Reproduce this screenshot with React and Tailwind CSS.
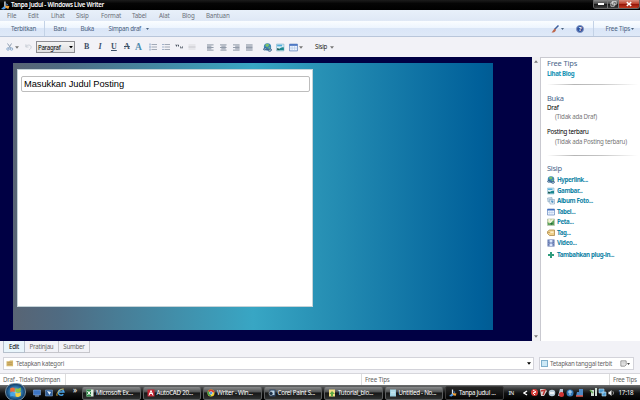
import React, { useState } from 'react';
import clsx from 'clsx';

const menus = [
  { label: 'File', w: 'w-[21px]' },
  { label: 'Edit', w: 'w-[23px]' },
  { label: 'Lihat', w: 'w-[25px]' },
  { label: 'Sisip', w: 'w-[25px]' },
  { label: 'Format', w: 'w-[31px]' },
  { label: 'Tabel', w: 'w-[27px]' },
  { label: 'Alat', w: 'w-[23px]' },
  { label: 'Blog', w: 'w-[24px]' },
  { label: 'Bantuan', w: 'w-[30px]' },
];

const Arrow = ({ className }) => (
  <svg viewBox="0 0 6 4" className={clsx('shrink-0', className)}>
    <path d="M0 0h6L3 4z" fill="currentColor" />
  </svg>
);

const Icon = ({ className, children }) => (
  <svg viewBox="0 0 16 16" className={clsx('shrink-0', className || 'w-[8px] h-[8px]')} fill="none">
    {children}
  </svg>
);

const LinkIcon = ({ className }) => (
  <Icon className={className}>
    <circle cx="8" cy="7" r="6.5" fill="#3c88b8" />
    <path d="M4 3c3-3 7-1 7 1L8 7 5 6zM9 8l4-1-1 4z" fill="#7fc268" />
    <path d="M1 11c0-3 6-3 7 0s7-3 7 1-6 3-7 0-7 3-7-1z" stroke="#31567e" strokeWidth="1.6" fill="#b5cfe2" />
  </Icon>
);

const ImageIcon = ({ className }) => (
  <Icon className={className}>
    <path d="M1 2h13v12H1z" fill="#dff1f8" stroke="#71a9c4" />
    <path d="M2 3h9v3H2z" fill="#52aedc" />
    <path d="M5 13c1-5 6-6 9-5v5z" fill="#1b8790" />
    <path d="M2 9l4 1v3H2z" fill="#1e5d55" />
  </Icon>
);

const TableIcon = ({ className }) => (
  <Icon className={className}>
    <path d="M1 2h14v12H1z" fill="#eef5ff" stroke="#6b8cc2" strokeWidth="1.5" />
    <path d="M1 2h14v3H1z" fill="#426fc0" />
    <path d="M5.5 5v9M10 5v9M1 9h14" stroke="#a9c1e2" />
  </Icon>
);

const AlbumIcon = () => (
  <Icon>
    <path d="M1 2l9-1 1 8-9 1z" fill="#c8dceb" stroke="#7a9bb5" />
    <path d="M5 5h10v9H6z" fill="#eef5fa" stroke="#6f8fae" />
    <path d="M7 7h6v4l-3 1z" fill="#5797c4" />
  </Icon>
);

const MapIcon = () => (
  <Icon>
    <path d="M1 2h14v13H1z" fill="#dfe7b8" stroke="#89a08a" />
    <path d="M1 8l5 3 8-7v10H2z" fill="#5da35c" />
    <path d="M4 2l3 7 4-6" stroke="#f7f8ee" strokeWidth="2" />
    <path d="M6 10l3 4 3-4z" fill="#286b3e" />
  </Icon>
);

const TagIcon = () => (
  <Icon>
    <path d="M5 2h10v11H5L1 9V5z" fill="#efd08b" stroke="#a98342" strokeWidth="1.5" />
    <path d="M7 5h6v3H7z" fill="#fbeecb" />
    <circle cx="4" cy="7" r="1" fill="#84602b" />
  </Icon>
);

const VideoIcon = () => (
  <Icon>
    <path d="M1 1h14v14H1z" fill="#5b70aa" />
    <path d="M5 2h6v5H5zM5 9h6v5H5z" fill="#dbe6fb" />
    <path d="M3 1v14M13 1v14" stroke="#a8b6dd" strokeDasharray="2 1.5" />
  </Icon>
);

const PlusIcon = () => (
  <Icon>
    <path d="M8 2v12M2 8h12" stroke="#2f9c7c" strokeWidth="4" />
  </Icon>
);

// small blue and orange "pen" mark of the application
const WriterIcon = ({ className }) => (
  <Icon className={className}>
    <path d="M7 1v10" stroke="#d9e4ef" strokeWidth="2.5" />
    <path d="M0 14l6-5 4 3-5 3z" fill="#4f9be8" />
    <path d="M7 8l8 1-2 5-5-2z" fill="#f1a23a" />
    <path d="M9 4l4 2-3 3z" fill="#4577b8" />
  </Icon>
);

const links = [
  { label: 'Hyperlink...', icon: <LinkIcon /> },
  { label: 'Gambar...', icon: <ImageIcon /> },
  { label: 'Album Foto...', icon: <AlbumIcon /> },
  { label: 'Tabel...', icon: <TableIcon /> },
  { label: 'Peta...', icon: <MapIcon /> },
  { label: 'Tag...', icon: <TagIcon /> },
  { label: 'Video...', icon: <VideoIcon /> },
];

const TitleBar = () => (
  <div className="h-[10px] shrink-0 flex items-start bg-[linear-gradient(#1c1c1c,#050505_35%,#000)] text-white">
    <WriterIcon className="w-[9px] h-[9px] ml-px mt-px" />
    <span className="ml-px font-semibold text-[6.2px] leading-[10px] tracking-[-0.28px]">Tanpa Judul - Windows Live Writer</span>
    <div className="ml-auto w-[47px] h-[9px] flex rounded-b-[3px] overflow-hidden border border-t-0 border-[#666]">
      <div className="w-[14px] flex items-center justify-center bg-[linear-gradient(#8a8a8a,#4a4a4a_45%,#161616_50%,#3b3b3b)] border-r border-[#777]">
        <div className="w-[6px] h-[2px] bg-white" />
      </div>
      <div className="w-[11px] flex items-center justify-center bg-[linear-gradient(#8a8a8a,#4a4a4a_45%,#161616_50%,#3b3b3b)] border-r border-[#777]">
        <Icon className="w-[7px] h-[6px]">
          <path d="M5 1h10v9H5zM1 5h9v9H1z" stroke="#eee" strokeWidth="2" />
        </Icon>
      </div>
      <div className="flex-1 flex items-center justify-center bg-[linear-gradient(#d98d7e,#bd4430_45%,#921307_50%,#c0391f)]">
        <Icon className="w-[6px] h-[6px]">
          <path d="M2 3l12 10M14 3L2 13" stroke="#fff" strokeWidth="3.5" />
        </Icon>
      </div>
    </div>
  </div>
);

const CommandBar = () => (
  <div className="h-[16px] shrink-0 flex items-center bg-[linear-gradient(#fafdff,#edf5fe_45%,#dae6f7_50%,#dfe9f8)] border-b border-[#b9c6da] text-[#4b6380] text-[6.2px]">
    <span className="w-[44px] pl-[11px]">Terbitkan</span>
    <div className="w-px h-[15px] bg-[#c3d2e6]" />
    <span className="w-[35.5px] pl-[8.5px] tracking-[-0.3px]">Baru</span>
    <span className="w-[28px]">Buka</span>
    <span className="w-[37px]">Simpan draf</span>
    <Arrow className="w-[3px] h-[2px]" />
    <div className="ml-auto flex items-center">
      <Icon className="w-[8px] h-[8px]">
        <path d="M15 1L7 9" stroke="#3d5f9e" strokeWidth="3" />
        <path d="M8 7l2 3c-2 5-5 5-9 5 3-2 3-6 7-8z" fill="#bd6548" />
      </Icon>
      <Arrow className="ml-[2px] mr-[12px] w-[3px] h-[2px]" />
      <div className="w-[8px] h-[8px] rounded-full bg-[#334f98] border border-[#7f97c8] text-white font-bold text-[6px] leading-[6px] text-center">?</div>
      <div className="ml-[9px] w-px h-[15px] bg-[#c3d2e6]" />
      <span className="ml-[11.5px] w-[25.5px] tracking-[-0.15px]">Free Tips</span>
      <Arrow className="w-[3px] h-[2px] mr-[6px]" />
    </div>
  </div>
);

const AlignIcon = ({ d }) => (
  <Icon className="w-[7px] h-[7px] mr-[6px]">
    <path d={d} stroke="#858f9f" strokeWidth="2" />
  </Icon>
);

const Toolbar = () => (
  <div className="h-[20px] shrink-0 flex items-center bg-[#f2f2f7] pl-[6px] text-[#45556c]">
    <Icon className="w-[8px] h-[8px]">
      <path d="M3 1l7 10M11 1L5 11" stroke="#93a2b5" strokeWidth="2" />
      <circle cx="4" cy="12" r="2.5" stroke="#7ba0c8" strokeWidth="1.6" />
      <circle cx="11" cy="12" r="2.5" stroke="#7ba0c8" strokeWidth="1.6" />
    </Icon>
    <Arrow className="ml-px w-[4px] h-[3px] text-[#777]" />
    <Icon className="ml-[6px] w-[7px] h-[8px]">
      <path d="M2 2v6h6M2 7c5-6 12-3 12 1 0 3-2 5-4 6" stroke="#c3c9d2" strokeWidth="2" />
    </Icon>
    <div className="ml-[4px] w-[39px] h-[12px] flex items-center border border-[#8d8d92] bg-[linear-gradient(#f4f4f4,#dedee0)] text-black">
      <span className="pl-px w-[32px] text-[6.2px] leading-[9px] tracking-[-0.3px]">Paragraf</span>
      <Arrow className="w-[4px] h-[2.5px]" />
    </div>
    <div className="flex items-center ml-[7px] w-[67px] text-[8px] leading-[10px] font-['Liberation_Serif',serif] font-bold text-[#3d5068] tracking-normal">
      <span className="w-[15px] pl-[2px]">B</span>
      <span className="w-[13px] pl-[1.5px] italic">I</span>
      <span className="w-[13px] pl-px underline">U</span>
      <span className="w-[12px] pl-px line-through">A</span>
      <span className="text-[9.5px] text-[#4e8cae]">A</span>
    </div>
    <Icon className="w-[8px] h-[8px]">
      <path d="M5 3h11M5 8h11M5 13h11" stroke="#8d97a6" strokeWidth="1.6" />
      <path d="M2 1v4M2 6v4M2 11v4" stroke="#6588b5" strokeWidth="1.6" />
    </Icon>
    <Icon className="ml-[5px] w-[8px] h-[8px]">
      <path d="M5 3h11M5 8h11M5 13h11" stroke="#8d97a6" strokeWidth="1.6" />
      <path d="M1 3h2M1 8h2M1 13h2" stroke="#54759f" strokeWidth="2.4" />
    </Icon>
    <Icon className="ml-[5px] w-[8px] h-[8px]">
      <path d="M1 4h2v3M5 4h2v3M10 8h2v3M14 8h2v3" stroke="#4d5663" strokeWidth="2" />
    </Icon>
    <Icon className="ml-[5px] mr-[11px] w-[8px] h-[8px]">
      <path d="M1 2h14v12H1z" fill="#e6e6ea" />
      <path d="M1 8h14" stroke="#c8c8ce" strokeWidth="2" />
    </Icon>
    <AlignIcon d="M0 2h15M0 5h10M0 8h15M0 11h10M0 14h15" />
    <AlignIcon d="M0 2h15M3 5h10M0 8h15M3 11h10M1 14h14" />
    <AlignIcon d="M0 2h15M5 5h10M0 8h15M5 11h10M0 14h15" />
    <AlignIcon d="M0 2h15M0 5h15M0 8h15M0 11h15M0 14h15" />
    <LinkIcon className="ml-[4px] w-[9px] h-[9px]" />
    <ImageIcon className="ml-[4px] w-[9px] h-[9px]" />
    <TableIcon className="ml-[4px] w-[9px] h-[9px]" />
    <Arrow className="ml-px w-[4px] h-[3px] text-[#777]" />
    <span className="ml-[12px] w-[14.5px] text-[6.2px] text-[#222]">Sisip</span>
    <Arrow className="w-[4px] h-[3px] text-[#777]" />
  </div>
);

const Editor = () => {
  const [title, setTitle] = useState('Masukkan Judul Posting');
  return (
    <div className="w-[532px] shrink-0 bg-[#000044] pt-[6px] pl-[13px]">
      <div className="w-[480px] h-[267px] pt-[6px] pl-[4px] bg-[linear-gradient(90deg,#586474,#4f6b82_10%,#38a6c4_50%,#2891b5_64%,#00609a_97%,#005c94)]">
        <div className="w-[296px] h-[238px] bg-white border border-[#c5d3d8] pt-[6px] pl-[3px]">
          <input
            value={title}
            onChange={(e) => setTitle(e.target.value)}
            className="block w-[289px] h-[16px] px-[2px] bg-white border border-[#bdbdbd] rounded-[2px] font-['Liberation_Sans',sans-serif] text-[9.3px] tracking-[-0.03px] text-black outline-none"
          />
        </div>
      </div>
    </div>
  );
};

const Divider = () => (
  <div className="w-[91px] h-px bg-[linear-gradient(90deg,transparent,#b5b5b5_30%,#c5c5c5_60%,transparent)]" />
);

const Sidebar = () => (
  <div className="flex-1 border-l border-[#c9c9d0] border-t bg-white pl-[6px] text-[6.2px]">
    <h2 className="h-[11px] text-[7.5px] leading-[10px] text-[#48658a] tracking-[-0.15px]">Free Tips</h2>
    <a className="block h-[10px] leading-[10px] font-bold text-[#1492b4] tracking-[-0.38px]">Lihat Blog</a>
    <div className="h-[14px] pt-[5px]"><Divider /></div>
    <h2 className="h-[9px] text-[7.5px] leading-[10px] text-[#48658a]">Buka</h2>
    <p className="h-[10px] leading-[11px] text-black">Draf</p>
    <p className="h-[15px] pl-[8px] leading-[10px] text-[#777]">(Tidak ada Draf)</p>
    <p className="h-[10px] leading-[10px] text-black">Posting terbaru</p>
    <p className="h-[16px] pl-[8px] leading-[10px] text-[#777]">(Tidak ada Posting terbaru)</p>
    <div className="h-[9px] pt-[2px]"><Divider /></div>
    <h2 className="h-[13px] text-[7.5px] leading-[12px] text-[#48658a]">Sisip</h2>
    {links.map((link) => (
      <a key={link.label} className="flex items-center h-[10.5px] gap-[2px] font-bold text-[#1284a6] tracking-[-0.38px]">
        {link.icon}
        <span>{link.label}</span>
      </a>
    ))}
    <a className="flex items-center h-[13px] gap-[2px] font-bold text-[#1284a6] tracking-[-0.36px]">
      <PlusIcon />
      <span>Tambahkan plug-in...</span>
    </a>
  </div>
);

const Bottom = () => (
  <div className="shrink-0 h-[44px] flex flex-col bg-[#f2f2f7] text-[6.2px] text-[#666]">
    <div className="flex h-[12px] pl-[3px] leading-[11px] text-center">
      <div className="w-[22px] border border-t-0 border-[#b6c0cc] bg-[#e9f5fb] text-black">Edit</div>
      <div className="w-[34px] border border-t-0 border-l-0 border-[#c6c6cc]">Pratinjau</div>
      <div className="w-[31px] border border-t-0 border-l-0 border-[#c6c6cc]">Sumber</div>
    </div>
    <div className="flex mt-[4px] h-[13px] pl-[3px] pr-[6px] gap-[5px]">
      <div className="flex-1 flex items-center bg-white border border-[#d3d3da] px-[2px]">
        <Icon className="w-[8px] h-[7px] mr-[2px]">
          <path d="M0 3h6l2-2h7v13H0z" fill="#d6b76b" />
          <path d="M2 6h11M2 10h11" stroke="#9c7c42" />
        </Icon>
        <span>Tetapkan kategori</span>
        <Arrow className="ml-auto w-[4px] h-[3px] text-black" />
      </div>
      <div className="w-[95px] flex items-center bg-white border border-[#d3d3da] pl-px pr-[3px]">
        <div className="w-[7px] h-[7px] shrink-0 border border-[#7fb0cc] bg-[#cde9f6]" />
        <span className="ml-[2px]">Tetapkan tanggal terbit</span>
        <Icon className="ml-auto w-[7px] h-[7px]">
          <path d="M2 2h12v9l-3 3H2z" fill="#eee" stroke="#888" strokeWidth="2" />
          <path d="M5 6h6M5 9h6" stroke="#aaa" />
        </Icon>
        <Arrow className="w-[3px] h-[2px] text-[#444]" />
      </div>
    </div>
    <div className="mt-[3px] h-[12px] flex bg-white border-t border-[#d6d6dc] leading-[12px]">
      <div className="w-[66px] pl-[3px] border-r border-[#ddd]">Draf - Tidak Disimpan</div>
      <div className="w-[296px] border-r border-[#ddd]" />
      <div className="w-[248px] pl-[3px] border-r border-[#ddd] tracking-[-0.15px]">Free Tips</div>
      <div className="flex-1 pl-[3px]">Free Tips</div>
    </div>
  </div>
);

const tasks = [
  {
    label: 'Microsoft Ex...',
    icon: <Icon><path d="M1 1h14v14H1z" fill="#dff0df" /><path d="M1 1h9v14H1z" fill="#2f8b48" /><path d="M3 4l6 8M9 4l-6 8" stroke="#fff" strokeWidth="2" /></Icon>,
  },
  {
    label: 'AutoCAD 20...',
    icon: <Icon><path d="M1 1h14v14H1z" fill="#c22533" /><path d="M4 13l4-10 4 10M5 9h6" stroke="#fff" strokeWidth="2" /></Icon>,
  },
  {
    label: 'Writer - Win...',
    icon: <Icon><circle cx="8" cy="8" r="7" fill="#f3cd32" /><path d="M8 8L2 4c3-5 11-4 13 2z" fill="#d9382e" /><path d="M8 8L2 4c-3 5 1 11 6 11z" fill="#43a04a" /><circle cx="8" cy="8" r="3" fill="#4086d8" stroke="#fff" /></Icon>,
  },
  {
    label: 'Corel Paint S...',
    icon: <Icon><path d="M3 1h12v14H3z" fill="#2c4260" /><path d="M5 3h8v9H5z" fill="#b4d3ea" /><circle cx="6" cy="9" r="4" fill="#1b3048" stroke="#ddd" /></Icon>,
  },
  {
    label: 'Tutorial_blo...',
    icon: <Icon><path d="M2 1h12v14H2z" fill="#f1dd83" /><path d="M8 4l6 6h-4v5H6v-5H3z" fill="#5fa945" /></Icon>,
  },
  {
    label: 'Untitled - No...',
    icon: <Icon><path d="M2 1h12v14H2z" fill="#9fd2e2" /><path d="M4 4h8M4 7h8M4 10h8" stroke="#e8f8fc" /></Icon>,
  },
  { label: 'Tanpa Judul ...', icon: <WriterIcon />, active: true },
];

const Taskbar = () => (
  <div className="h-[15px] shrink-0 flex items-center bg-[linear-gradient(#6f7172,#3b3d3e_25%,#101111_55%,#000)] text-white text-[6.2px]">
    <div className="-mt-[2px] ml-[5px] w-[21px] h-[18px] rounded-full border border-[#7895a8] bg-[radial-gradient(#8ed0ee,#266ba0_50%,#0a2a50_80%)] flex items-center justify-center">
      <Icon className="w-[13px] h-[12px]">
        <path d="M1 3c3-2 5-1 6 0v5c-2-1-4-1-6 0z" fill="#ee6b35" />
        <path d="M8 3c2 1 4 1 7-1v5c-3 2-5 2-7 1z" fill="#8dc63f" />
        <path d="M1 9c2-1 4-1 6 0v5c-2-1-4-1-6 0z" fill="#48a6e8" />
        <path d="M8 9c2 1 4 1 7-1v5c-3 2-5 2-7 1z" fill="#fbd23c" />
      </Icon>
    </div>
    <Icon className="ml-[7px] w-[8px] h-[8px]">
      <path d="M1 2h14v10H1z" fill="#3d75c3" stroke="#91b5e8" />
      <path d="M4 14h8" stroke="#9db6d9" strokeWidth="2" />
    </Icon>
    <Icon className="ml-[4px] w-[8px] h-[8px]">
      <path d="M1 2h14v12H1z" fill="#315f9a" stroke="#8eb2d9" />
      <path d="M4 4l8 2-3 6z" fill="#e2f0fc" />
    </Icon>
    <Icon className="ml-[3px] w-[9px] h-[9px]">
      <path d="M13 11a5 5 0 1 1 1-4H4" stroke="#4aa5e8" strokeWidth="2.6" />
      <path d="M2 14C-1 10 9 0 14 2" stroke="#edc147" strokeWidth="1.5" />
    </Icon>
    <span className="ml-[8px] w-[9px] -mt-[5px] text-[8px]">»</span>
    <div className="flex gap-[2px]">
      {tasks.map((task) => (
        <div
          key={task.label}
          className={clsx(
            'w-[58.5px] h-[14px] flex items-center pl-[3px] gap-[2px] rounded-[2px] border overflow-hidden',
            task.active
              ? 'border-[#3b3b3b] bg-[linear-gradient(#262626,#050505)]'
              : 'border-[#5c5e5f] bg-[linear-gradient(#898b8c,#535556_40%,#161717_50%,#2e3030)]'
          )}
        >
          {task.icon}
          <span>{task.label}</span>
        </div>
      ))}
    </div>
    <span className="ml-[5px] w-[14px] text-[5.5px]">IN</span>
    <svg viewBox="0 0 86 12" className="w-[86px] h-[12px] shrink-0" fill="none">
      <path d="M4 4L1 6l3 2" stroke="#fff" strokeWidth="1.4" />
      <circle cx="11.5" cy="5.500" r="3.5" fill="#d53a36" />
      <path d="M10 3l3 2-3 1 2 2" stroke="#fff" />
      <path d="M17 2h5l2 2-3 5h-3z" fill="#d8d0cf" />
      <path d="M18 4l4-1-2 5" stroke="#bd3532" strokeWidth="1.5" />
      <circle cx="29" cy="6" r="3.3" fill="#b8ccda" />
      <path d="M27 6h4" stroke="#fff" strokeWidth="1.5" />
      <path d="M35 9l2-7h3v7z" fill="#b7c7d7" />
      <circle cx="38.5" cy="7.5" r="2.5" fill="#cf3434" />
      <circle cx="47" cy="6" r="3.5" fill="#3478b6" />
      <path d="M47 3v5M45 5h4" stroke="#c7e3f5" />
      <path d="M54 5h6v4h-7zM56 2h4v4h-4z" fill="#4f8ac5" />
      <path d="M53 9h7" stroke="#e15948" strokeWidth="1.5" />
      <path d="M68 3h3v6h-3zM72 1h2v8h-2z" fill="#cfdccf" />
      <path d="M67 3l3 3" stroke="#69ae58" strokeWidth="1.5" />
      <path d="M76 2h5v4h-5zM79 5h4v4h-4z" fill="#4b99cd" stroke="#c2e2f5" strokeWidth=".6" />
    </svg>
    <Icon className="w-[7px] h-[8px] -ml-px">
      <path d="M1 5h3l4-4v14l-4-4H1z" fill="#eee" />
      <path d="M11 4c2 2 2 6 0 8" stroke="#ddd" strokeWidth="1.5" />
    </Icon>
    <span className="ml-[4px] text-[6.2px] tracking-[-0.2px]">17:18</span>
  </div>
);

export default function App() {
  return (
    <div className="w-[640px] h-[400px] flex flex-col overflow-hidden bg-[#f2f2f7] font-['Noto_Sans',sans-serif] leading-[10px] tracking-[-0.26px] whitespace-nowrap">
      <TitleBar />
      <div className="h-[11px] shrink-0 flex items-center pl-[7px] bg-[linear-gradient(#e8f0fa,#dfe8f5)] text-[#6a7079] text-[6.2px] tracking-[-0.15px]">
        {menus.map((m) => (
          <span key={m.label} className={m.w}>{m.label}</span>
        ))}
      </div>
      <CommandBar />
      <Toolbar />
      <div className="h-[284px] shrink-0 flex">
        <Editor />
        <div className="w-[8px] shrink-0 flex flex-col items-center justify-between py-[3px] bg-[#f0f0f2] text-[#777]">
          <Arrow className="w-[4px] h-[3px] rotate-180" />
          <Arrow className="w-[4px] h-[3px]" />
        </div>
        <Sidebar />
      </div>
      <Bottom />
      <Taskbar />
    </div>
  );
}
